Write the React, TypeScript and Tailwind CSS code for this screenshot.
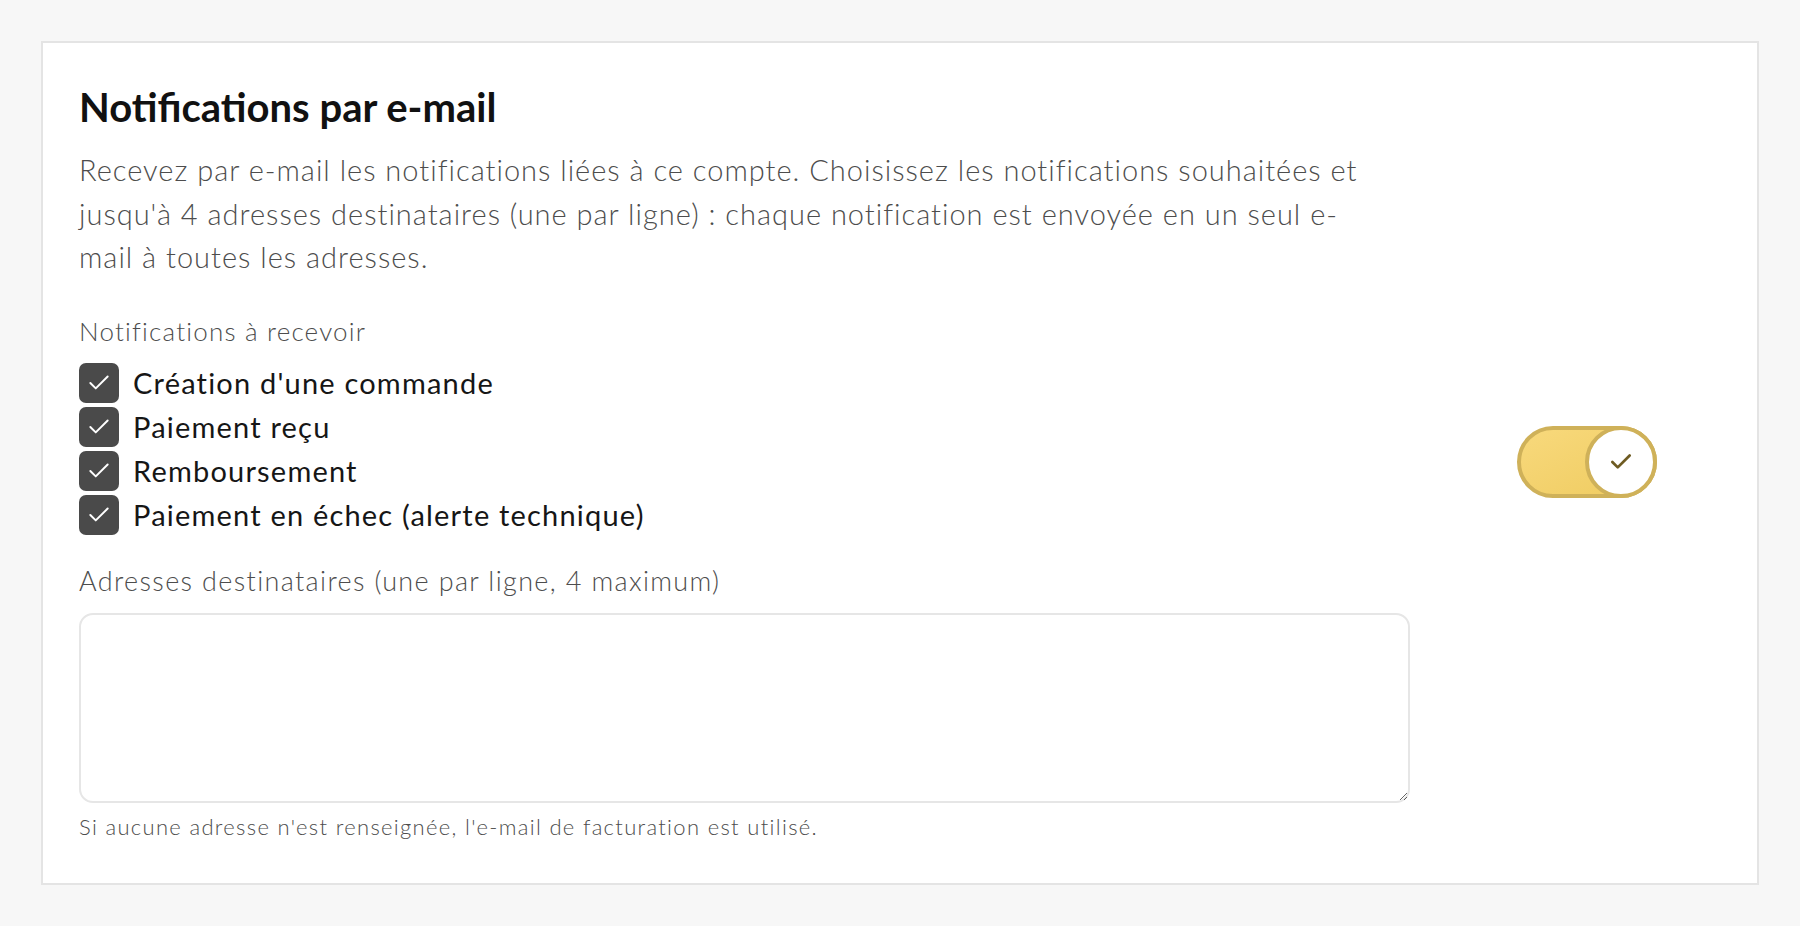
import { Check } from "lucide-react";

const NOTIFICATIONS = [
  "Création d'une commande",
  "Paiement reçu",
  "Remboursement",
  "Paiement en échec (alerte technique)",
];

const Checkbox = ({ label }: { label: string }) => (
  <label className="flex items-center gap-[14px] h-[44px]">
    <span className="flex items-center justify-center w-[40px] h-[40px] rounded-[7px] bg-[#4a4a4a]">
      <Check className="w-[26px] h-[26px] text-white" strokeWidth={1.8} />
    </span>
    <span className="text-[29px] tracking-[1.2px] text-[#161616]">{label}</span>
  </label>
);

const Toggle = () => (
  <div className="relative w-[140px] h-[72px] rounded-full border-[4px] border-[#cfb159] bg-gradient-to-br from-[#f8d97c] to-[#efcb5f]">
    <div className="absolute right-[-4px] top-[-4px] w-[72px] h-[72px] rounded-full border-[4px] border-[#cfb159] bg-white flex items-center justify-center">
      <Check className="w-[26px] h-[26px] text-[#6e5b22]" strokeWidth={2.5} />
    </div>
  </div>
);

export default function App() {
  return (
    <div className="min-h-screen bg-[#f7f7f7] p-[41px] font-['Lato',sans-serif]">
      <div className="flex items-center bg-white border-2 border-[#e4e4e4] pl-[36px] pr-[100px] pt-[40px] pb-[42px]">
        <div className="w-[1331px]">
          <h2 className="text-[40px] font-bold text-[#111] leading-[48px]">
            Notifications par e-mail
          </h2>
          <p className="mt-[17px] max-w-[1305px] text-[29px] tracking-[1px] leading-[43.5px] text-[#4d4d4d] font-light">
            Recevez par e-mail les notifications liées à ce compte. Choisissez les notifications
            souhaitées et jusqu'à 4 adresses destinataires (une par ligne) : chaque notification est
            envoyée en un seul e-mail à toutes les adresses.
          </p>
          <p className="mt-[34px] text-[26px] tracking-[1.2px] text-[#4d4d4d] leading-[36px] font-light">
            Notifications à recevoir
          </p>
          <div className="mt-[12px] flex flex-col">
            {NOTIFICATIONS.map((n) => (
              <Checkbox key={n} label={n} />
            ))}
          </div>
          <p className="mt-[26px] text-[27px] tracking-[1.35px] text-[#4d4d4d] leading-[36px] font-light">
            Adresses destinataires (une par ligne, 4 maximum)
          </p>
          <textarea className="mt-[14px] block w-full h-[190px] rounded-[14px] border-2 border-[#e6e6e6] bg-white" />
          <p className="mt-[10px] text-[22px] tracking-[1.32px] text-[#4d4d4d] leading-[28px] font-light">
            Si aucune adresse n'est renseignée, l'e-mail de facturation est utilisé.
          </p>
        </div>
        <div className="ml-auto">
          <Toggle />
        </div>
      </div>
    </div>
  );
}
